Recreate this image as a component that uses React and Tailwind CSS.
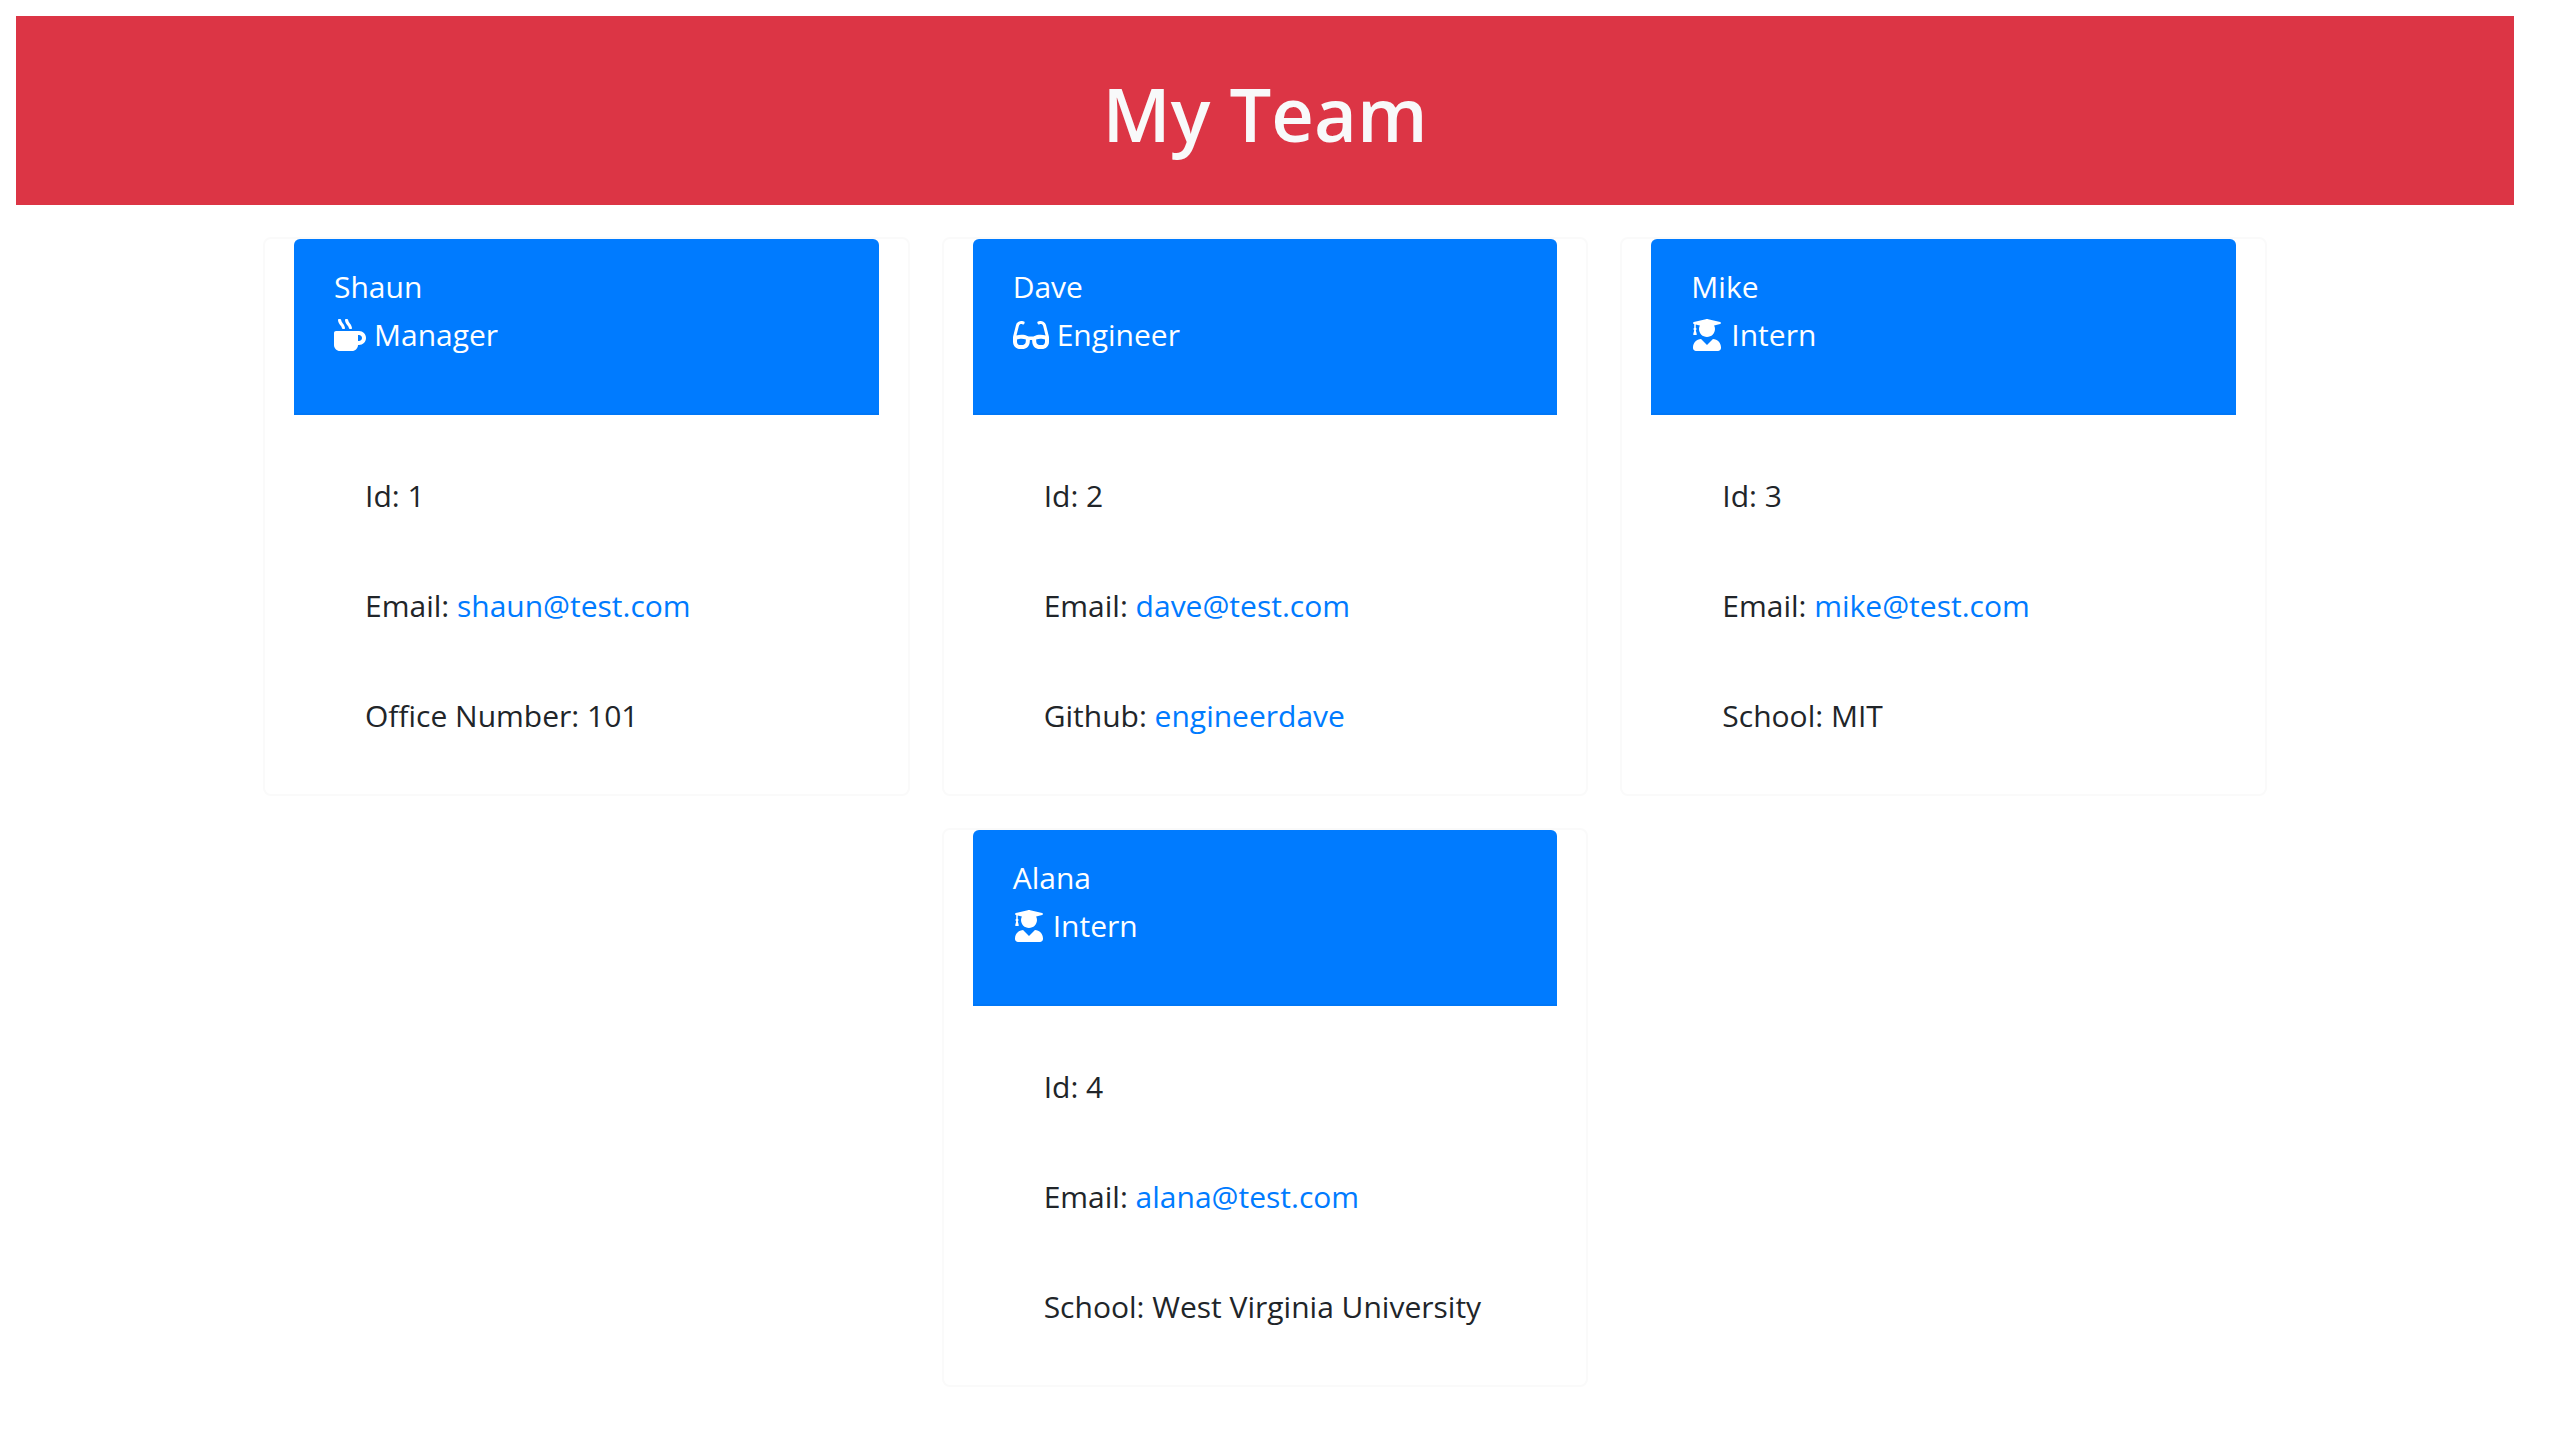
import React from "react";
import { FaMugHot, FaGlasses, FaUserGraduate } from "react-icons/fa";

const roles = {
  Manager: { Icon: FaMugHot, size: "h-8 w-8" },
  Engineer: { Icon: FaGlasses, size: "h-8 w-9" },
  Intern: { Icon: FaUserGraduate, size: "h-8 w-8" },
};

const team = [
  { name: "Shaun", role: "Manager", id: 1, email: "shaun@test.com", label: "Office Number", value: "101" },
  { name: "Dave", role: "Engineer", id: 2, email: "dave@test.com", label: "Github", value: "engineerdave", href: "https://github.com/engineerdave" },
  { name: "Mike", role: "Intern", id: 3, email: "mike@test.com", label: "School", value: "MIT" },
  { name: "Alana", role: "Intern", id: 4, email: "alana@test.com", label: "School", value: "West Virginia University" },
];

function Card({ name, role, id, email, label, value, href }) {
  const { Icon, size } = roles[role];
  return (
    <article className="w-[calc((100%-64px)/3)] min-w-[560px] rounded-lg border-2 border-[#fafafa] px-[29px]">
      <header className="rounded-t-md border-b-2 border-[#0077f7] bg-[#007bff] px-10 pt-6 pb-[54px] text-white">
        <h2>{name}</h2>
        <p className="flex items-center gap-2">
          <Icon className={`${size} shrink-0`} aria-hidden="true" />
          {role}
        </p>
      </header>
      <ul className="flex flex-col gap-[62px] px-[71px] pt-[57px] pb-[54px]">
        <li>Id: {id}</li>
        <li>
          Email: <a className="text-[#007bff]" href={`mailto:${email}`}>{email}</a>
        </li>
        <li>
          {label}: {href ? <a className="text-[#007bff]" href={href}>{value}</a> : value}
        </li>
      </ul>
    </article>
  );
}

export default function App() {
  return (
    <div className="bg-white py-4 pr-[46px] pl-4 font-['Open_Sans',sans-serif] text-[30px] leading-[48px] text-[#212529]">
      <header className="bg-[#dc3545] px-8 pt-[50px] pb-[43px] text-center">
        <h1 className="text-[74px] leading-[96px] font-semibold text-[#f8f9fa]">My Team</h1>
      </header>
      <main className="mx-auto mt-8 flex max-w-[2004px] flex-wrap justify-center gap-8">
        {team.map((member) => (
          <Card key={member.id} {...member} />
        ))}
      </main>
    </div>
  );
}
